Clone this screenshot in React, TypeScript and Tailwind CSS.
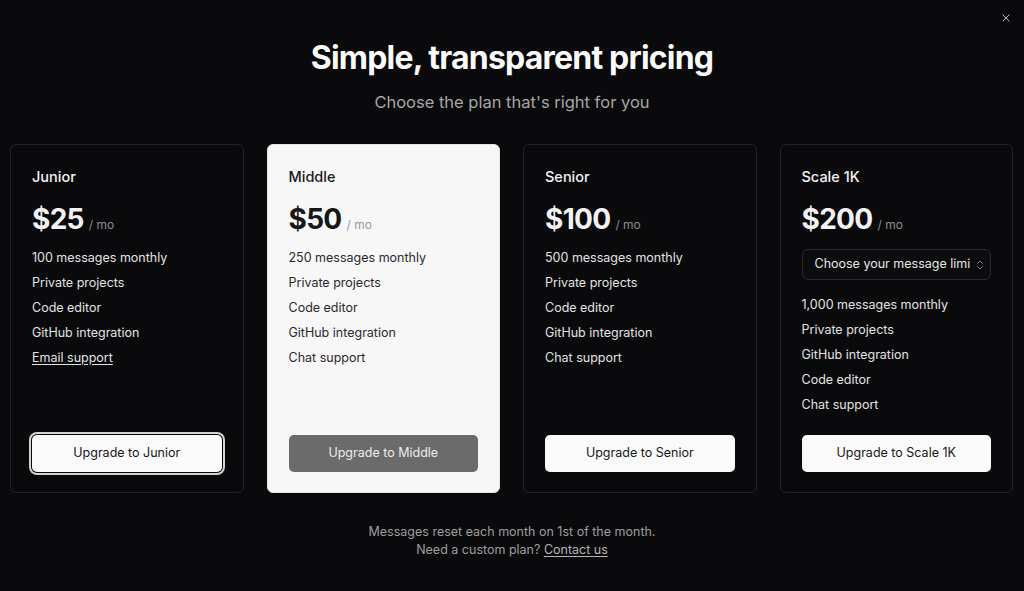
import { X, ChevronsUpDown } from 'lucide-react'

interface Plan {
  name: string
  price: string
  features: string[]
  highlight?: boolean
  focused?: boolean
  select?: boolean
  underlineLast?: boolean
}

const plans: Plan[] = [
  {
    name: 'Junior',
    price: '$25',
    features: ['100 messages monthly', 'Private projects', 'Code editor', 'GitHub integration', 'Email support'],
    focused: true,
    underlineLast: true
  },
  {
    name: 'Middle',
    price: '$50',
    features: ['250 messages monthly', 'Private projects', 'Code editor', 'GitHub integration', 'Chat support'],
    highlight: true
  },
  {
    name: 'Senior',
    price: '$100',
    features: ['500 messages monthly', 'Private projects', 'Code editor', 'GitHub integration', 'Chat support']
  },
  {
    name: 'Scale 1K',
    price: '$200',
    features: ['1,000 messages monthly', 'Private projects', 'GitHub integration', 'Code editor', 'Chat support'],
    select: true
  }
]

function PlanCard({ plan }: { plan: Plan }) {
  const light = plan.highlight
  return (
    <div
      className={`flex flex-col rounded-md border px-[21px] pt-[22px] pb-[20px] ${
        light ? 'bg-[#f7f7f7] border-[#e5e5e5] text-[#171717]' : 'bg-[#0a0a0c] border-[#232326] text-[#f2f2f2]'
      }`}
    >
      <h3 className="text-[14.5px] leading-5 font-medium">{plan.name}</h3>
      <div className="mt-[14px] flex items-baseline gap-[5px]">
        <span className="text-[28px] leading-9 font-bold tracking-tight">{plan.price}</span>
        <span className={`text-[12px] ${light ? 'text-[#9a9a9a]' : 'text-[#8c8c8c]'}`}>/ mo</span>
      </div>
      {plan.select && (
        <button className="mt-[12px] flex h-[31px] w-full items-center justify-between rounded-md border border-[#2a2a2d] bg-[#0c0c0e] pl-[12px] pr-[7px] text-[12.5px] text-[#e5e5e5]">
          <span className="whitespace-nowrap">Choose your message limi</span>
          <ChevronsUpDown className="ml-1 size-3 shrink-0 text-[#a3a3a3]" strokeWidth={1.5} />
        </button>
      )}
      <ul className={`${plan.select ? 'mt-[12px]' : 'mt-[8px]'} text-[12.5px]`}>
        {plan.features.map((f, i) => (
          <li
            key={f}
            className={`leading-[25px] ${light ? 'text-[#2a2a2a]' : 'text-[#e3e3e3]'} ${
              plan.underlineLast && i === plan.features.length - 1 ? 'underline underline-offset-2' : ''
            }`}
          >
            {f}
          </li>
        ))}
      </ul>
      <div className="mt-auto pt-[18px]">
        {light ? (
          <button className="h-[37px] w-full rounded-[5px] bg-[#6b6b6b] text-[12.5px] text-[#ececec]">
            Upgrade to {plan.name}
          </button>
        ) : (
          <button
            className={`h-[37px] w-full rounded-[5px] bg-[#fafafa] text-[12.5px] text-[#171717] ${
              plan.focused ? 'ring-2 ring-[#d4d4d4] ring-offset-1 ring-offset-[#0a0a0c]' : ''
            }`}
          >
            Upgrade to {plan.name}
          </button>
        )}
      </div>
    </div>
  )
}

export default function App() {
  return (
    <div
      className="relative flex h-[591px] w-full flex-col bg-[#0a0a0c] text-white"
      style={{ fontFamily: 'Inter, "Noto Sans", sans-serif' }}
    >
      <button className="absolute right-[12px] top-[12px] text-[#bdbdbd]">
        <X className="size-3" strokeWidth={2} />
      </button>
      <div className="pt-[38px] text-center">
        <h1 className="text-[32px] leading-10 font-bold tracking-tight text-[#fafafa]">Simple, transparent pricing</h1>
        <p className="mt-[12px] text-[16.5px] leading-6 text-[#a6a6a6]">Choose the plan that's right for you</p>
      </div>
      <div className="mt-[30px] grid grid-cols-4 gap-[23px] pl-[10px] pr-[11px]">
        {plans.map((p) => (
          <PlanCard key={p.name} plan={p} />
        ))}
      </div>
      <div className="mt-[30px] text-center text-[12.5px] leading-[18px] text-[#9e9e9e]">
        <p>Messages reset each month on 1st of the month.</p>
        <p>
          Need a custom plan?{' '}
          <a className="underline underline-offset-2 text-[#b5b5b5]" href="#">
            Contact us
          </a>
        </p>
      </div>
    </div>
  )
}
